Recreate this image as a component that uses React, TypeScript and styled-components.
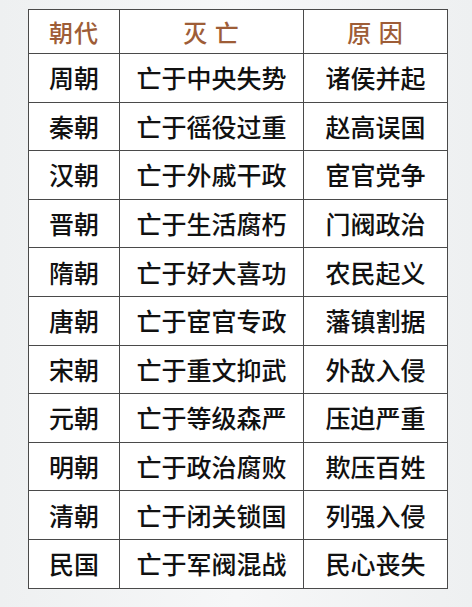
import React from "react";
import styled, { createGlobalStyle } from "styled-components";

const GlobalStyle = createGlobalStyle`
    html, body {
        margin: 0;
        padding: 0;
        background: #f1f3f4;
    }
`;

const Page = styled.div`
    width: 472px;
    height: 607px;
    box-sizing: border-box;
    padding: 9px 0 0 28px;
    background: linear-gradient(90deg, #eef0f1 0%, #f6f7f8 50%, #eef0f1 100%);
`;

const Table = styled.table`
    border-collapse: collapse;
    background: #ffffff;
    width: 416px;
    table-layout: fixed;
    font-family: "Noto Sans CJK SC", "Noto Sans", sans-serif;
`;

const HeadCell = styled.th<{ $w: number }>`
    width: ${(p) => p.$w}px;
    height: 43px;
    padding: 0;
    border: 1.5px solid #4a4a4a;
    color: #9e5d37;
    font-size: 24px;
    font-weight: 500;
    letter-spacing: 1px;
    text-align: center;
    vertical-align: middle;
`;

const Cell = styled.td`
    height: 47.6px;
    padding: 0;
    border: 1.5px solid #4a4a4a;
    color: #111111;
    font-size: 25px;
    font-weight: 500;
    text-align: center;
    vertical-align: middle;
    line-height: 1;
`;

const rows: [string, string, string][] = [
    ["周朝", "亡于中央失势", "诸侯并起"],
    ["秦朝", "亡于徭役过重", "赵高误国"],
    ["汉朝", "亡于外戚干政", "宦官党争"],
    ["晋朝", "亡于生活腐朽", "门阀政治"],
    ["隋朝", "亡于好大喜功", "农民起义"],
    ["唐朝", "亡于宦官专政", "藩镇割据"],
    ["宋朝", "亡于重文抑武", "外敌入侵"],
    ["元朝", "亡于等级森严", "压迫严重"],
    ["明朝", "亡于政治腐败", "欺压百姓"],
    ["清朝", "亡于闭关锁国", "列强入侵"],
    ["民国", "亡于军阀混战", "民心丧失"],
];

const App: React.FC = () => {
    return (
        <Page>
            <GlobalStyle />
            <Table>
                <thead>
                    <tr>
                        <HeadCell $w={90}>朝代</HeadCell>
                        <HeadCell $w={183}>灭 亡</HeadCell>
                        <HeadCell $w={143}>原 因</HeadCell>
                    </tr>
                </thead>
                <tbody>
                    {rows.map((r) => (
                        <tr key={r[0]}>
                            <Cell>{r[0]}</Cell>
                            <Cell>{r[1]}</Cell>
                            <Cell>{r[2]}</Cell>
                        </tr>
                    ))}
                </tbody>
            </Table>
        </Page>
    );
};

export default App;
